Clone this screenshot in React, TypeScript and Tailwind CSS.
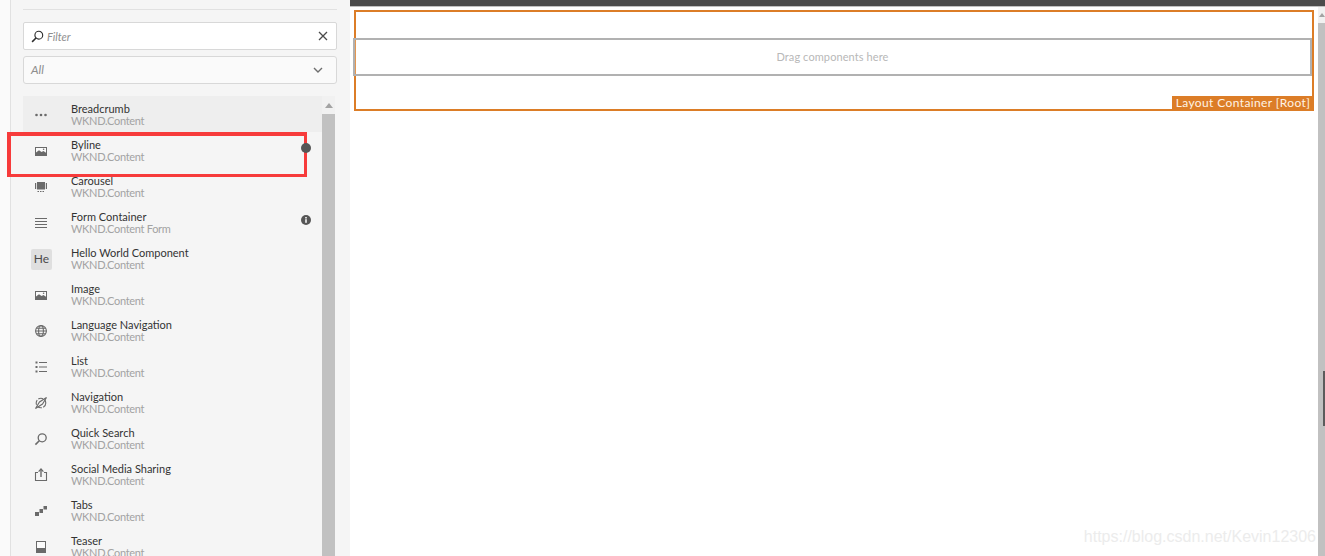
import React from "react";

const c = "#6a6a6a";

const ImageIcon = () => (
  <svg width="14" height="14" viewBox="0 0 14 14" fill="none">
    <rect x="1.5" y="3.5" width="11" height="8" fill="#fbfbfb" stroke={c} />
    <path d="M2 11.5 V8.5 L5 6.2 L7.5 8 L9.5 7 L12 8.8 V11.5 Z" fill={c} />
    <circle cx="9.6" cy="5.3" r="0.8" fill={c} />
  </svg>
);

const icons: Record<string, React.ReactNode> = {
  dots: (
    <svg width="14" height="14" viewBox="0 0 14 14" fill={c}>
      <circle cx="2.5" cy="7" r="1.3" />
      <circle cx="7" cy="7" r="1.3" />
      <circle cx="11.5" cy="7" r="1.3" />
    </svg>
  ),
  image: <ImageIcon />,
  carousel: (
    <svg width="14" height="14" viewBox="0 0 14 14" fill={c}>
      <rect x="3" y="2" width="8" height="7.5" />
      <rect x="1" y="3" width="1.2" height="6" />
      <rect x="11.8" y="3" width="1.2" height="6" />
      <rect x="3.5" y="11" width="1.5" height="1" />
      <rect x="6" y="11" width="1.5" height="1" />
      <rect x="8.5" y="11" width="1.5" height="1" />
    </svg>
  ),
  form: (
    <svg width="14" height="14" viewBox="0 0 14 14" fill={c}>
      <rect x="1" y="2" width="12" height="1" />
      <rect x="1" y="5" width="12" height="1" />
      <rect x="1" y="8" width="12" height="1" />
      <rect x="1" y="11" width="12" height="1" />
    </svg>
  ),
  globe: (
    <svg width="14" height="14" viewBox="0 0 14 14" fill="none" stroke={c} strokeWidth="1.1">
      <circle cx="7" cy="7" r="5.4" fill="#f5f5f5" />
      <ellipse cx="7" cy="7" rx="2.4" ry="5.4" />
      <path d="M1.6 7H12.4M2.4 4.2H11.6M2.4 9.8H11.6" />
    </svg>
  ),
  list: (
    <svg width="14" height="14" viewBox="0 0 14 14" fill={c}>
      <rect x="1.5" y="1.5" width="2" height="2" />
      <rect x="1.5" y="6" width="2" height="2" />
      <rect x="1.5" y="10.5" width="2" height="2" />
      <rect x="5" y="2" width="8" height="1" />
      <rect x="5" y="6.5" width="8" height="1" />
      <rect x="5" y="11" width="8" height="1" />
    </svg>
  ),
  nav: (
    <svg width="14" height="14" viewBox="0 0 14 14" fill="none" stroke={c} strokeWidth="1.1">
      <circle cx="7" cy="7" r="4.8" strokeDasharray="5 1.4" />
      <path d="M12.5 1.5 L5.5 6 L1.5 12.5 L8.5 8 Z" fill="#f5f5f5" />
    </svg>
  ),
  search: (
    <svg width="14" height="14" viewBox="0 0 14 14" fill="none" stroke={c} strokeWidth="1.3">
      <circle cx="8.2" cy="5.8" r="4" />
      <path d="M5.3 8.7 L1.4 12.6" strokeWidth="1.6" />
    </svg>
  ),
  share: (
    <svg width="14" height="14" viewBox="0 0 14 14" fill="none" stroke={c} strokeWidth="1.1">
      <path d="M4 4.5H1.5V12.5H12.5V4.5H10" />
      <path d="M7 9V1.5" strokeWidth="1.4" />
      <path d="M4.6 3.6 L7 1 L9.4 3.6" strokeWidth="1.2" />
    </svg>
  ),
  tabs: (
    <svg width="14" height="14" viewBox="0 0 14 14" fill={c}>
      <rect x="1" y="8" width="4" height="4" />
      <rect x="5.5" y="5" width="3.5" height="4" />
      <rect x="9.5" y="2" width="3.5" height="3.5" />
    </svg>
  ),
  teaser: (
    <svg width="14" height="14" viewBox="0 0 14 14" fill="none" stroke={c} strokeWidth="1">
      <rect x="2.5" y="1.5" width="9" height="11" fill="#fbfbfb" />
      <rect x="2.5" y="8.5" width="9" height="4" fill={c} />
    </svg>
  ),
};

const items = [
  { name: "Breadcrumb", sub: "WKND.Content", icon: "dots", active: true },
  { name: "Byline", sub: "WKND.Content", icon: "image", dot: true },
  { name: "Carousel", sub: "WKND.Content", icon: "carousel" },
  { name: "Form Container", sub: "WKND.Content Form", icon: "form", info: true },
  { name: "Hello World Component", sub: "WKND.Content", icon: "he" },
  { name: "Image", sub: "WKND.Content", icon: "image" },
  { name: "Language Navigation", sub: "WKND.Content", icon: "globe" },
  { name: "List", sub: "WKND.Content", icon: "list" },
  { name: "Navigation", sub: "WKND.Content", icon: "nav" },
  { name: "Quick Search", sub: "WKND.Content", icon: "search" },
  { name: "Social Media Sharing", sub: "WKND.Content", icon: "share" },
  { name: "Tabs", sub: "WKND.Content", icon: "tabs" },
  { name: "Teaser", sub: "WKND.Content", icon: "teaser" },
];

const InfoDot = ({ solid }: { solid?: boolean }) => (
  <svg width="10" height="10" viewBox="0 0 10 10" className="shrink-0">
    <circle cx="5" cy="5" r="5" fill="#565656" />
    {!solid && <rect x="4.2" y="4.2" width="1.6" height="3.6" fill="#f5f5f5" />}
    {!solid && <rect x="4.2" y="2" width="1.6" height="1.5" fill="#f5f5f5" />}
  </svg>
);

export default function App() {
  return (
    <div
      className="relative flex h-[556px] w-[1325px] overflow-hidden bg-white"
      style={{ fontFamily: 'Lato, "Open Sans", sans-serif' }}
    >
      <div className="h-full w-[11px] shrink-0 border-r border-[#e1e1e1] bg-[#fafafa]" />
      <aside className="flex h-full w-[339px] shrink-0 flex-col bg-[#f5f5f5] pt-[9px]">
        <div className="ml-3 mr-[13px] h-px bg-[#e1e1e1]" />
        <div className="ml-3 mr-[13px] mt-3 flex h-[28px] items-center rounded-[2px] border border-[#d8d8d8] bg-white pl-[7px] pr-[8px]">
          <svg width="13" height="13" viewBox="0 0 14 14" fill="none" stroke="#2c2c2c" strokeWidth="1.2">
            <circle cx="8.4" cy="5.6" r="4.2" />
            <path d="M5.4 8.6 L1.2 12.8" strokeWidth="1.6" />
          </svg>
          <span className="ml-[3px] flex-1 pt-[2px] text-[11px] italic text-[#8e8e8e]">Filter</span>
          <svg width="10" height="10" viewBox="0 0 10 10" stroke="#4b4b4b" strokeWidth="1.3" fill="none">
            <path d="M1 1 L9 9 M9 1 L1 9" />
          </svg>
        </div>
        <div className="ml-3 mr-[13px] mt-[6px] flex h-[28px] items-center rounded-[3px] border border-[#d8d8d8] bg-[#fafafa] pl-[7px] pr-[13px]">
          <span className="flex-1 text-[12px] italic text-[#8e8e8e]">All</span>
          <svg width="10" height="6" viewBox="0 0 10 6" stroke="#6e6e6e" strokeWidth="1.4" fill="none">
            <path d="M1 1 L5 5 L9 1" />
          </svg>
        </div>
        <div className="ml-3 mr-[15px] mt-3 flex min-h-0 flex-1 overflow-hidden">
          <div className="w-[299px] shrink-0">
            {items.map((it) => (
              <div
                key={it.name}
                className={`flex h-9 items-center ${it.active ? "bg-[#eeeeee]" : ""}`}
              >
                <div className="flex w-[48px] shrink-0 justify-start pl-[11px] pt-[2px]">
                  {it.icon === "he" ? (
                    <div className="-ml-[3px] flex h-[21px] w-[21px] items-center justify-center rounded-[2px] bg-[#dfdfdf] text-[12px] text-[#4b4b4b]">
                      He
                    </div>
                  ) : (
                    icons[it.icon]
                  )}
                </div>
                <div className="min-w-0 flex-1 pt-[2px] text-[11px] leading-[12px]">
                  <div className="text-[#333333]">{it.name}</div>
                  <div className="tracking-[-0.3px] text-[#a3a3a3]">{it.sub}</div>
                </div>
                {(it.info || it.dot) && (
                  <div className="relative z-10 mb-[4px] mr-[11px]">
                    <InfoDot solid={it.dot} />
                  </div>
                )}
              </div>
            ))}
          </div>
          <div className="flex w-[13px] shrink-0 flex-col bg-[#f1f1f1]">
            <div className="flex h-[18px] items-center justify-center">
              <div className="h-0 w-0 border-x-[4px] border-b-[5px] border-x-transparent border-b-[#a3a3a3]" />
            </div>
            <div className="flex-1 bg-[#c1c1c1]" />
          </div>
        </div>
      </aside>
      <main className="flex h-full min-w-0 flex-1 flex-col">
        <div className="h-[7px] shrink-0 border-b border-[#c0c0c0] bg-[#4b4b4b]" />
        <div className="flex min-h-0 flex-1">
          <div className="min-w-0 flex-1 pl-1 pt-[3px]">
            <div className="relative h-[101px] w-[960px] border-2 border-[#dc7d27] pt-[26px]">
              <div className="-ml-[3px] flex h-[38px] w-[959px] items-center justify-center border-2 border-[#b1b1b1] bg-white/20 text-[11px] tracking-[0.1px] text-[#b8b8b8]">
                Drag components here
              </div>
              <div className="absolute -bottom-[2px] -right-[2px] flex h-[15px] w-[142px] items-center justify-center bg-[#dc7d27] pb-px text-[12px] tracking-[0.38px] text-[#fff3e6]">
                Layout Container [Root]
              </div>
            </div>
          </div>
          <div className="flex w-[7px] shrink-0 flex-col bg-[#f1f1f1]">
            <div className="flex h-[16px] items-center justify-center">
              <div className="h-0 w-0 border-x-[3px] border-b-[4px] border-x-transparent border-b-[#a3a3a3]" />
            </div>
            <div className="flex-1 bg-[#c1c1c1]" />
          </div>
        </div>
      </main>
      <div className="absolute left-[7px] top-[132px] h-[45px] w-[300px] border-y-[3px] border-r-[3px] border-l-4 border-t-4 border-[#f73b3b]" />
      <div className="absolute bottom-[7px] right-[9px] text-[16px] text-[#ececec]" style={{ fontFamily: '"Liberation Sans", sans-serif' }}>
        https://blog.csdn.net/Kevin12306
      </div>
      <div className="absolute right-0 top-[371px] h-[55px] w-[2px] bg-[#5c5c5c]" />
    </div>
  );
}
